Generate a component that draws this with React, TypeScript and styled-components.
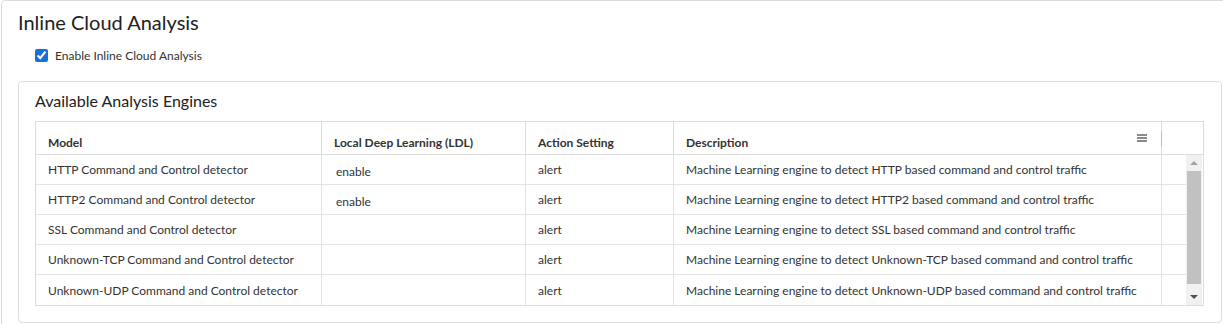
import React from "react";
import styled, { createGlobalStyle } from "styled-components";

const Global = createGlobalStyle`
  html, body { margin: 0; padding: 0; background: #fff; overflow: hidden; }
  body { font-family: Lato, "Open Sans", Arial, sans-serif; color: #333; }
  * { box-sizing: border-box; }
`;

const Panel = styled.section`
  margin-left: 1px;
  width: 1238px;
  min-height: 330px;
  border: 1px solid #dcdcdc;
  border-radius: 4px;
  padding: 7px 16px 16px 16px;
`;

const Title = styled.h1`
  margin: 0;
  font-size: 20px;
  line-height: 28px;
  font-weight: 400;
  color: #222;
`;

const CheckRow = styled.label`
  display: flex;
  align-items: center;
  gap: 7px;
  margin: 9px 0 0 17px;
  height: 20px;
  font-size: 12px;
  color: #333;
`;

const Check = styled.input`
  margin: 0;
  width: 13px;
  height: 13px;
  accent-color: #1a6fd6;
`;

const Card = styled.div`
  margin-top: 16px;
  width: 1204px;
  border: 1px solid #dcdcdc;
  border-radius: 4px;
  padding: 9px 17px 16px 16px;
`;

const CardTitle = styled.h2`
  margin: 0 0 10px 0;
  font-size: 16px;
  line-height: 20px;
  font-weight: 400;
  color: #222;
`;

const Table = styled.div`
  border: 1px solid #dcdcdc;
  width: 1169px;
`;

const GRID = "286px 204px 148px 488px 1fr";

const HeaderRow = styled.div`
  display: grid;
  grid-template-columns: ${GRID};
  height: 33px;
  border-bottom: 1px solid #dcdcdc;
`;

const HeadCell = styled.div<{ $last?: boolean }>`
  display: flex;
  align-items: center;
  justify-content: space-between;
  padding: 9px 14px 0 12px;
  font-size: 12px;
  font-weight: 700;
  color: #333;
  border-right: ${(p) => (p.$last ? "none" : "1px solid #dcdcdc")};
  position: relative;
`;

const Handle = styled.span`
  position: absolute;
  right: -1px;
  top: 9px;
  width: 1px;
  height: 16px;
  background: #bdbdbd;
`;

const Menu = styled.span`
  display: flex;
  flex-direction: column;
  gap: 1.5px;
  margin-top: -9px;
  & > i {
    display: block;
    width: 10px;
    height: 1.5px;
    background: #8a8a8a;
  }
`;

const Body = styled.div`
  display: flex;
`;

const Rows = styled.div`
  flex: 1;
`;

const Row = styled.div<{ $last?: boolean }>`
  display: grid;
  grid-template-columns: ${GRID};
  height: 30px;
  border-bottom: ${(p) => (p.$last ? "none" : "1px solid #e4e4e4")};
`;

const Cell = styled.div<{ $drop?: boolean; $last?: boolean }>`
  display: flex;
  align-items: center;
  padding: ${(p) => (p.$drop ? "3px 12px 0 14px" : "0 12px 0 12px")};
  font-size: 12px;
  color: #333;
  white-space: nowrap;
  border-right: ${(p) => (p.$last ? "none" : "1px solid #e4e4e4")};
`;

const Scrollbar = styled.div`
  width: 16px;
  margin-right: 1px;
  background: #f1f1f1;
  display: flex;
  flex-direction: column;
  align-items: center;
`;

const Arrow = styled.div<{ $down?: boolean }>`
  height: 16px;
  width: 16px;
  display: flex;
  align-items: center;
  justify-content: center;
  &::after {
    content: "";
    border-left: 4px solid transparent;
    border-right: 4px solid transparent;
    ${(p) =>
      p.$down
        ? "border-top: 4px solid #505050;"
        : "border-bottom: 4px solid #a3a3a3;"}
  }
`;

const Track = styled.div`
  flex: 1;
  width: 100%;
  padding: 0 1px;
  display: flex;
  flex-direction: column;
`;

const Thumb = styled.div`
  height: 113px;
  background: #c1c1c1;
  width: 100%;
`;

const data = [
  ["HTTP Command and Control detector", "enable", "alert", "Machine Learning engine to detect HTTP based command and control traffic"],
  ["HTTP2 Command and Control detector", "enable", "alert", "Machine Learning engine to detect HTTP2 based command and control traffic"],
  ["SSL Command and Control detector", "", "alert", "Machine Learning engine to detect SSL based command and control traffic"],
  ["Unknown-TCP Command and Control detector", "", "alert", "Machine Learning engine to detect Unknown-TCP based command and control traffic"],
  ["Unknown-UDP Command and Control detector", "", "alert", "Machine Learning engine to detect Unknown-UDP based command and control traffic"],
];

export default function App() {
  return (
    <>
      <Global />
      <Panel>
        <Title>Inline Cloud Analysis</Title>
        <CheckRow>
          <Check type="checkbox" defaultChecked />
          Enable Inline Cloud Analysis
        </CheckRow>
        <Card>
          <CardTitle>Available Analysis Engines</CardTitle>
          <Table>
            <HeaderRow>
              <HeadCell>Model</HeadCell>
              <HeadCell>Local Deep Learning (LDL)</HeadCell>
              <HeadCell>Action Setting</HeadCell>
              <HeadCell>
                Description
                <Menu>
                  <i />
                  <i />
                  <i />
                </Menu>
                <Handle />
              </HeadCell>
              <HeadCell $last />
            </HeaderRow>
            <Body>
              <Rows>
                {data.map((r, i) => (
                  <Row key={i} $last={i === data.length - 1}>
                    <Cell>{r[0]}</Cell>
                    <Cell $drop>{r[1]}</Cell>
                    <Cell>{r[2]}</Cell>
                    <Cell>{r[3]}</Cell>
                    <Cell $last />
                  </Row>
                ))}
              </Rows>
              <Scrollbar>
                <Arrow />
                <Track>
                  <Thumb />
                </Track>
                <Arrow $down />
              </Scrollbar>
            </Body>
          </Table>
        </Card>
      </Panel>
    </>
  );
}
